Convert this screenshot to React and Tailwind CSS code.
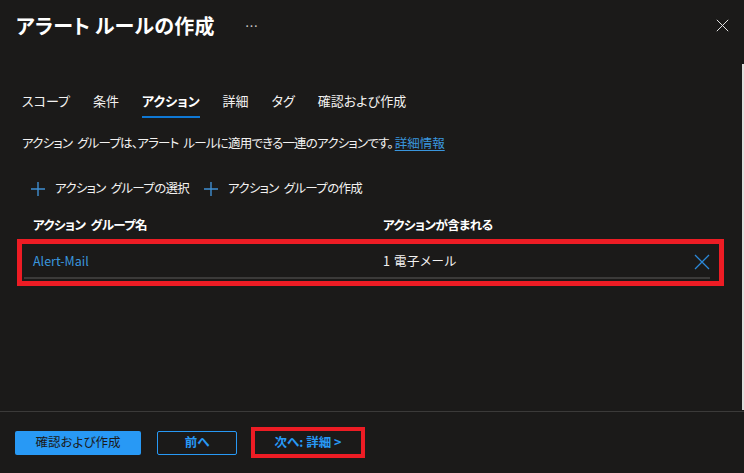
import React from "react";

const tabs = ["スコープ", "条件", "アクション", "詳細", "タグ", "確認および作成"];

const Plus = () => (
  <svg width="14" height="14" viewBox="0 0 14 14" className="shrink-0">
    <path d="M7 0v14M0 7h14" stroke="#3f8fd2" strokeWidth="1.4" />
  </svg>
);

const Cross = ({ size = 13, color = "#e6e6e6", width = 1.2 }) => (
  <svg width={size} height={size} viewBox="0 0 16 16">
    <path d="M1 1l14 14M15 1L1 15" stroke={color} strokeWidth={width} />
  </svg>
);

const App = () => {
  return (
    <div className="relative w-[744px] h-[473px] overflow-hidden bg-[#1b1a19] text-[#f3f2f1] flex flex-col font-['Noto_Sans_CJK_JP','Noto_Sans',sans-serif] [font-feature-settings:'palt']">
      {/* Header */}
      <div className="flex items-center h-[50px] pl-[16px] pr-[15px]">
        <h1 className="text-[20px] font-semibold text-white tracking-[0.3px] mt-[1px]">
          アラート ルールの作成
        </h1>
        <span className="ml-[30px] text-[13px] text-[#c8c6c4] mt-[2px]">…</span>
        <div className="flex-1" />
        <Cross />
      </div>

      {/* Tabs */}
      <div className="flex gap-[23px] pl-[22px] mt-[41px] text-[13px]">
        {tabs.map((t, i) => (
          <div key={t} className="flex flex-col">
            <span className={i === 2 ? "text-white font-semibold" : "text-[#f3f2f1]"}>
              {t}
            </span>
            <div className={i === 2 ? "h-[2px] mt-[5px] bg-[#0f78d4]" : "h-[2px] mt-[5px]"} />
          </div>
        ))}
      </div>

      {/* Description */}
      <p className="pl-[22px] mt-[16px] text-[12.5px] tracking-[-0.8px] [word-spacing:3px] text-[#f3f2f1]">
        アクション グループは、アラート ルールに適用できる一連のアクションです。
        <span className="ml-[2px] text-[#3a96dd] underline underline-offset-2 tracking-normal">詳細情報</span>
      </p>

      {/* Toolbar */}
      <div className="flex items-center pl-[31px] mt-[27px] text-[12.5px] tracking-[-0.7px] [word-spacing:3px]">
        <div className="flex items-center gap-[10px]">
          <Plus />
          <span>アクション グループの選択</span>
        </div>
        <div className="flex items-center gap-[10px] ml-[15px]">
          <Plus />
          <span>アクション グループの作成</span>
        </div>
      </div>

      {/* Table header */}
      <div className="grid grid-cols-[350px_1fr] pl-[33px] mt-[18px] text-[12.5px] font-semibold text-white tracking-[-0.6px] [word-spacing:3px]">
        <span>アクション グループ名</span>
        <span>アクションが含まれる</span>
      </div>

      {/* Selected row */}
      <div className="ml-[17px] mr-[20px] mt-[4px] border-[5px] border-[#ed1c24] h-[47px]">
        <div className="flex items-center h-[35px] pt-[3px] ml-[2px] mr-[9px] border-b-2 border-[#3b3a39] text-[12.5px]">
          <span className="w-[359px] pl-[9px] text-[#3a96dd]">Alert-Mail</span>
          <span className="flex-1 tracking-[0.6px]">1 電子メール</span>
          <Cross size={16} color="#2b88d8" width={1.3} />
        </div>
      </div>

      <div className="flex-1" />

      {/* Footer */}
      <div className="h-[62px] border-t border-[#3b3a39] flex items-center pl-[15px] text-[12.5px]">
        <button className="w-[126px] h-[24px] rounded-[2px] bg-[#2899f5] text-[#1b1a19]">
          確認および作成
        </button>
        <button className="ml-[16px] w-[80px] h-[24px] rounded-[2px] border border-[#2899f5] text-[#2899f5] font-semibold">
          前へ
        </button>
        <button className="ml-[14px] w-[114px] h-[31px] border-[4px] border-[#ed1c24] text-[#2899f5] font-semibold">
          次へ: 詳細 &gt;
        </button>
      </div>

      {/* Scrollbar edge */}
      <div className="absolute right-0 top-[64px] bottom-[63px] w-[2px] bg-[#e1dfdd]" />
    </div>
  );
};

export default App;
